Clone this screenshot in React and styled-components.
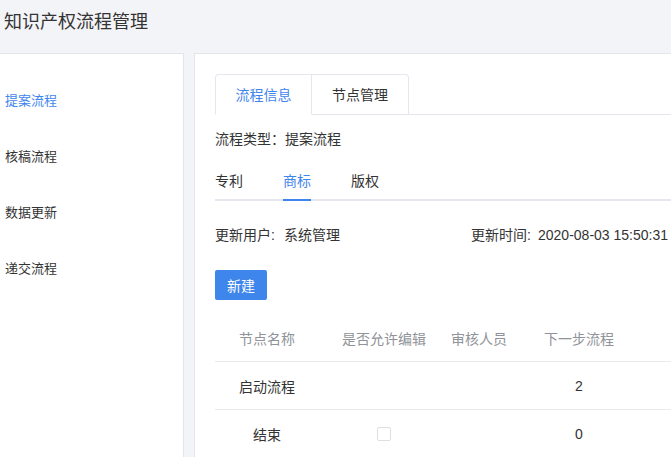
import styled, { createGlobalStyle } from "styled-components";

const GlobalStyle = createGlobalStyle`
  html, body {
    margin: 0;
    padding: 0;
    overflow: hidden;
    background: #f3f4f8;
    font-family: "Liberation Sans", "Noto Sans CJK SC", sans-serif;
    color: #333;
  }
  * { box-sizing: border-box; }
`;

const Page = styled.div`
  width: 671px;
  height: 457px;
  display: flex;
  flex-direction: column;
`;

const Header = styled.div`
  height: 53px;
  flex: none;
  padding: 10px 0 0 4px;
  font-size: 18px;
  line-height: 24px;
  color: #333;
`;

const Body = styled.div`
  flex: 1;
  display: flex;
  gap: 10px;
  min-height: 0;
`;

const Sidebar = styled.div`
  width: 184px;
  flex: none;
  background: #fff;
  border-top: 1px solid #e4e5ea;
  border-right: 1px solid #e4e5ea;
  padding-top: 19px;
`;

const NavItem = styled.div`
  height: 56px;
  line-height: 56px;
  padding-left: 5px;
  font-size: 13px;
  color: ${(p) => (p.$active ? "#3f86ec" : "#333")};
`;

const Main = styled.div`
  flex: 1;
  min-width: 0;
  background: #fff;
  border-top: 1px solid #e4e5ea;
  border-left: 1px solid #e4e5ea;
  padding: 20px 0 0 20px;
`;

const CardTabs = styled.div`
  display: flex;
  border-bottom: 1px solid #e4e7ed;
  height: 41px;
`;

const CardTab = styled.div`
  width: 97px;
  height: 41px;
  line-height: 40px;
  text-align: center;
  font-size: 14px;
  border: 1px solid #e4e7ed;
  border-left: ${(p) => (p.$first ? "1px solid #e4e7ed" : "none")};
  border-bottom: 1px solid ${(p) => (p.$active ? "#fff" : "#e4e7ed")};
  border-radius: ${(p) => (p.$first ? "4px 0 0 0" : "0 4px 0 0")};
  color: ${(p) => (p.$active ? "#3f86ec" : "#333")};
`;

const TypeLine = styled.div`
  padding-top: 14px;
  font-size: 14px;
  line-height: 20px;
`;

const SubTabs = styled.div`
  display: flex;
  margin-top: 12px;
  border-bottom: 2px solid #e4e7ed;
`;

const SubTab = styled.div`
  height: 38px;
  line-height: 40px;
  margin-right: 40px;
  margin-bottom: -2px;
  font-size: 14px;
  color: ${(p) => (p.$active ? "#3f86ec" : "#333")};
  border-bottom: 2px solid ${(p) => (p.$active ? "#3f86ec" : "transparent")};
  box-sizing: content-box;
`;

const InfoRow = styled.div`
  display: flex;
  margin-top: 22px;
  font-size: 14px;
  line-height: 24px;
  white-space: nowrap;
`;

const InfoGroup = styled.div`
  display: flex;
  width: ${(p) => (p.$wide ? "256px" : "auto")};
`;

const InfoLabel = styled.span`
  width: ${(p) => p.$w}px;
  color: #333;
`;

const Button = styled.button`
  margin-top: 23px;
  width: 52px;
  height: 30px;
  border: none;
  border-radius: 2px;
  background: #3f86ec;
  color: #fff;
  font-family: inherit;
  font-size: 14px;
  padding: 0;
`;

const Table = styled.div`
  margin-top: 14px;
`;

const Row = styled.div`
  display: grid;
  grid-template-columns: 104px 130px 60px 140px 1fr;
  height: 48px;
  align-items: center;
  border-bottom: 1px solid #e8eaee;
  font-size: 14px;
  color: ${(p) => (p.$head ? "#909399" : "#333")};
`;

const Cell = styled.div`
  text-align: center;
  display: flex;
  justify-content: center;
  white-space: nowrap;
`;

const Checkbox = styled.span`
  display: inline-block;
  width: 14px;
  height: 14px;
  border: 1px solid #dcdfe6;
  border-radius: 2px;
  background: #fff;
`;

const navItems = ["提案流程", "核稿流程", "数据更新", "递交流程"];
const rows = [
  { name: "启动流程", edit: false, next: "2" },
  { name: "结束", edit: true, next: "0" },
];

export default function App() {
  return (
    <Page>
      <GlobalStyle />
      <Header>知识产权流程管理</Header>
      <Body>
        <Sidebar>
          {navItems.map((n, i) => (
            <NavItem key={n} $active={i === 0}>{n}</NavItem>
          ))}
        </Sidebar>
        <Main>
          <CardTabs>
            <CardTab $first $active>流程信息</CardTab>
            <CardTab>节点管理</CardTab>
          </CardTabs>
          <TypeLine>流程类型：提案流程</TypeLine>
          <SubTabs>
            <SubTab>专利</SubTab>
            <SubTab $active>商标</SubTab>
            <SubTab>版权</SubTab>
          </SubTabs>
          <InfoRow>
            <InfoGroup $wide>
              <InfoLabel $w={69}>更新用户:</InfoLabel>
              <span>系统管理</span>
            </InfoGroup>
            <InfoGroup>
              <InfoLabel $w={67}>更新时间:</InfoLabel>
              <span>2020-08-03 15:50:31</span>
            </InfoGroup>
          </InfoRow>
          <Button>新建</Button>
          <Table>
            <Row $head>
              <Cell>节点名称</Cell>
              <Cell>是否允许编辑</Cell>
              <Cell>审核人员</Cell>
              <Cell>下一步流程</Cell>
              <Cell />
            </Row>
            {rows.map((r) => (
              <Row key={r.name}>
                <Cell>{r.name}</Cell>
                <Cell>{r.edit && <Checkbox />}</Cell>
                <Cell />
                <Cell>{r.next}</Cell>
                <Cell />
              </Row>
            ))}
          </Table>
        </Main>
      </Body>
    </Page>
  );
}
